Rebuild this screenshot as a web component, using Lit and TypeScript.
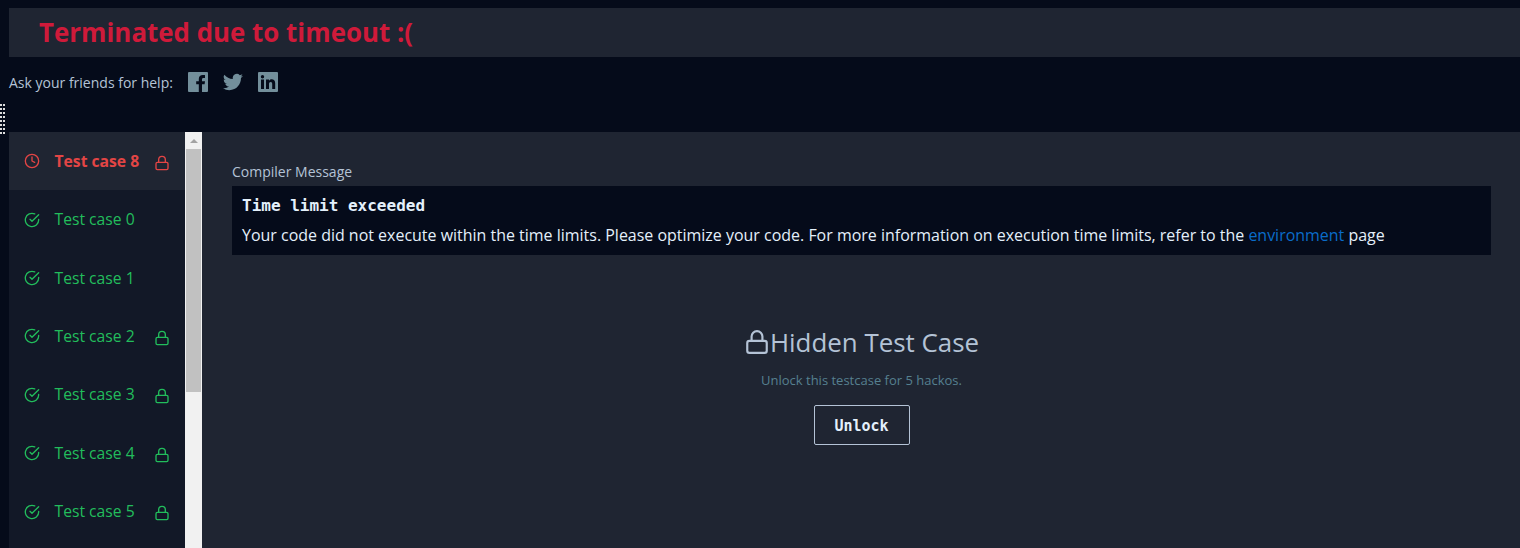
import { LitElement, html, css, svg } from "lit";
import { customElement } from "lit/decorators.js";

const cases = [
  { name: "Test case 8", locked: true, failed: true },
  { name: "Test case 0", locked: false },
  { name: "Test case 1", locked: false },
  { name: "Test case 2", locked: true },
  { name: "Test case 3", locked: true },
  { name: "Test case 4", locked: true },
  { name: "Test case 5", locked: true },
];

const lock = (cls: string) => html`<svg class=${cls} viewBox="0 0 24 24" fill="none" stroke="currentColor" stroke-width="2" stroke-linecap="round" stroke-linejoin="round">
  <rect x="3" y="11" width="18" height="11" rx="2"></rect>
  <path d="M7 11V7a5 5 0 0 1 10 0v4"></path>
</svg>`;

const clock = svg`<circle cx="12" cy="12" r="10"></circle><path d="M12 6v6l4 2"></path>`;
const check = svg`<path d="M22 11.08V12a10 10 0 1 1-5.93-9.14"></path><path d="M22 4 12 14.01l-3-3"></path>`;

@customElement("app-root")
export class AppRoot extends LitElement {
  static styles = css`
    :host {
      display: block;
      height: 548px;
      overflow: hidden;
      background: #050b1a;
      font-family: "Open Sans", sans-serif;
      position: relative;
    }
    .top {
      padding: 8px 0 0 9px;
    }
    .banner {
      height: 49px;
      background: #1f2532;
      padding-left: 30px;
      display: flex;
      align-items: center;
    }
    .banner h1 {
      margin: 0 0 1px;
      font-size: 25.9px;
      font-weight: 700;
      color: #cf1a3a;
    }
    .share {
      height: 75px;
      display: flex;
      align-items: flex-start;
      padding-top: 16px;
      box-sizing: border-box;
      color: #b4c3d6;
      font-size: 14px;
    }
    .share span {
      line-height: 20px;
      margin-right: 15px;
    }
    .share svg {
      width: 20px;
      height: 20px;
      margin: -1px 15px 0 0;
      fill: #738f9b;
    }
    .grip {
      position: absolute;
      left: 0;
      top: 104px;
      width: 5px;
      height: 30px;
      background-image: conic-gradient(at 2px 2px, transparent 75%, #ddd 0);
      background-size: 3px 4px;
    }
    .body {
      display: flex;
      height: 416px;
      padding-left: 9px;
    }
    .side {
      width: 176px;
      background: #121827;
      flex: none;
    }
    .case {
      height: 58.4px;
      display: flex;
      align-items: center;
      padding-left: 15px;
      color: #22bd5c;
      font-size: 15.7px;
      box-sizing: border-box;
    }
    .case.failed {
      background: #1f2532;
      color: #e34545;
      font-weight: 700;
    }
    .case .state {
      width: 16px;
      height: 16px;
      margin-right: 14.5px;
      fill: none;
      stroke: currentColor;
      stroke-width: 2;
      stroke-linecap: round;
      stroke-linejoin: round;
    }
    .case .name {
      width: 85px;
      white-space: nowrap;
      margin-top: -0.6px;
    }
    .case .lk {
      width: 16px;
      height: 16px;
      margin-left: 14px;
      margin-top: 3px;
    }
    .scroll {
      width: 17px;
      flex: none;
      background: #f1f1f1;
      display: flex;
      flex-direction: column;
      align-items: center;
    }
    .scroll .arrow {
      height: 17px;
      width: 17px;
      display: flex;
      align-items: center;
      justify-content: center;
    }
    .scroll .arrow i {
      border: 4px solid transparent;
      border-top: 0;
      border-bottom: 4px solid #a3a3a3;
    }
    .scroll .thumb {
      width: 15px;
      height: 243px;
      background: #c1c1c1;
    }
    .main {
      flex: 1;
      background: #1f2532;
      padding: 30px 29px 0 30px;
      min-width: 0;
    }
    .label {
      color: #b4c3d6;
      font-size: 14px;
      line-height: 20px;
      margin-bottom: 4px;
    }
    .msg {
      background: #050b1a;
      height: 69px;
      padding: 9px 10px 0;
      box-sizing: border-box;
      color: #e4f0fb;
    }
    .msg pre {
      margin: 0;
      font-family: "DejaVu Sans Mono", monospace;
      font-weight: 700;
      font-size: 16px;
      line-height: 22px;
    }
    .msg p {
      margin: 7px 0 0;
      font-size: 15.97px;
      line-height: 22px;
    }
    .msg a {
      color: #0a6cc9;
      text-decoration: none;
    }
    .hidden {
      margin-top: 69px;
      display: flex;
      flex-direction: column;
      align-items: center;
    }
    .hidden h2 {
      margin: 0;
      font-size: 25.9px;
      font-weight: 400;
      line-height: 36px;
      color: #b4c3d6;
      display: flex;
      align-items: center;
    }
    .hidden h2 svg {
      width: 26px;
      height: 26px;
    }
    .hidden p {
      margin: 11px 0 0;
      font-size: 13px;
      line-height: 18px;
      color: #568090;
    }
    .hidden button {
      margin-top: 16px;
      width: 96px;
      height: 40px;
      padding: 1px 0 0;
      background: transparent;
      border: 1px solid #b4c3d6;
      border-radius: 2px;
      color: #e4f0fb;
      font-family: "DejaVu Sans Mono", monospace;
      font-weight: 700;
      font-size: 15px;
    }
  `;

  render() {
    return html`
      <div class="top">
        <div class="banner"><h1>Terminated due to timeout :(</h1></div>
        <div class="share">
          <span>Ask your friends for help:</span>
          <svg viewBox="0 0 20 20"><path d="M1 0h18a1 1 0 0 1 1 1v18a1 1 0 0 1-1 1h-5v-7.7h2.6l.4-3h-3V7.4c0-.9.3-1.5 1.5-1.5H17V3.2c-.3 0-1.200-.1-2.300-.1-2.300 0-3.900 1.400-3.900 4v2.200H8.200v3h2.600V20H1a1 1 0 0 1-1-1V1a1 1 0 0 1 1-1z"></path></svg>
          <svg viewBox="0 0 24 24"><path d="M23.950 4.570a10 10 0 0 1-2.820.770 4.960 4.960 0 0 0 2.160-2.720 9.900 9.900 0 0 1-3.120 1.180 4.920 4.920 0 0 0-8.380 4.480A13.980 13.980 0 0 1 1.640 3.160a4.920 4.920 0 0 0 1.520 6.570 4.900 4.900 0 0 1-2.230-.620v.060a4.920 4.920 0 0 0 3.950 4.830 5 5 0 0 1-2.210.080 4.940 4.940 0 0 0 4.600 3.420A9.870 9.870 0 0 1 0 19.540a13.940 13.940 0 0 0 7.550 2.210c9.050 0 14-7.500 14-13.980 0-.210 0-.420-.020-.630a9.940 9.940 0 0 0 2.420-2.570z"></path></svg>
          <svg viewBox="0 0 20 20"><path fill-rule="evenodd" d="M1 0h18a1 1 0 0 1 1 1v18a1 1 0 0 1-1 1H1a1 1 0 0 1-1-1V1a1 1 0 0 1 1-1zm2 7.500V17h3V7.500H3zM4.500 3a1.700 1.700 0 1 0 0 3.400 1.700 1.700 0 0 0 0-3.400zM8 7.500V17h3v-4.900c0-1.300.5-2.200 1.700-2.200 1.100 0 1.500.8 1.500 2.100v5h3v-5.500c0-3-1.500-4.200-3.500-4.200-1.400 0-2.200.7-2.700 1.400V7.500H8z"></path></svg>
        </div>
      </div>
      <div class="grip"></div>
      <div class="body">
        <div class="side">
          ${cases.map(
            (c) => html`<div class="case ${c.failed ? "failed" : ""}">
              <svg class="state" viewBox="0 0 24 24">${c.failed ? clock : check}</svg>
              <span class="name">${c.name}</span>
              ${c.locked ? lock("lk") : ""}
            </div>`
          )}
        </div>
        <div class="scroll">
          <div class="arrow"><i></i></div>
          <div class="thumb"></div>
        </div>
        <div class="main">
          <div class="label">Compiler Message</div>
          <div class="msg">
            <pre>Time limit exceeded</pre>
            <p>Your code did not execute within the time limits. Please optimize your code. For more information on execution time limits, refer to the <a href="#">environment</a> page</p>
          </div>
          <div class="hidden">
            <h2>${lock("")}Hidden Test Case</h2>
            <p>Unlock this testcase for 5 hackos.</p>
            <button>Unlock</button>
          </div>
        </div>
      </div>
    `;
  }
}
